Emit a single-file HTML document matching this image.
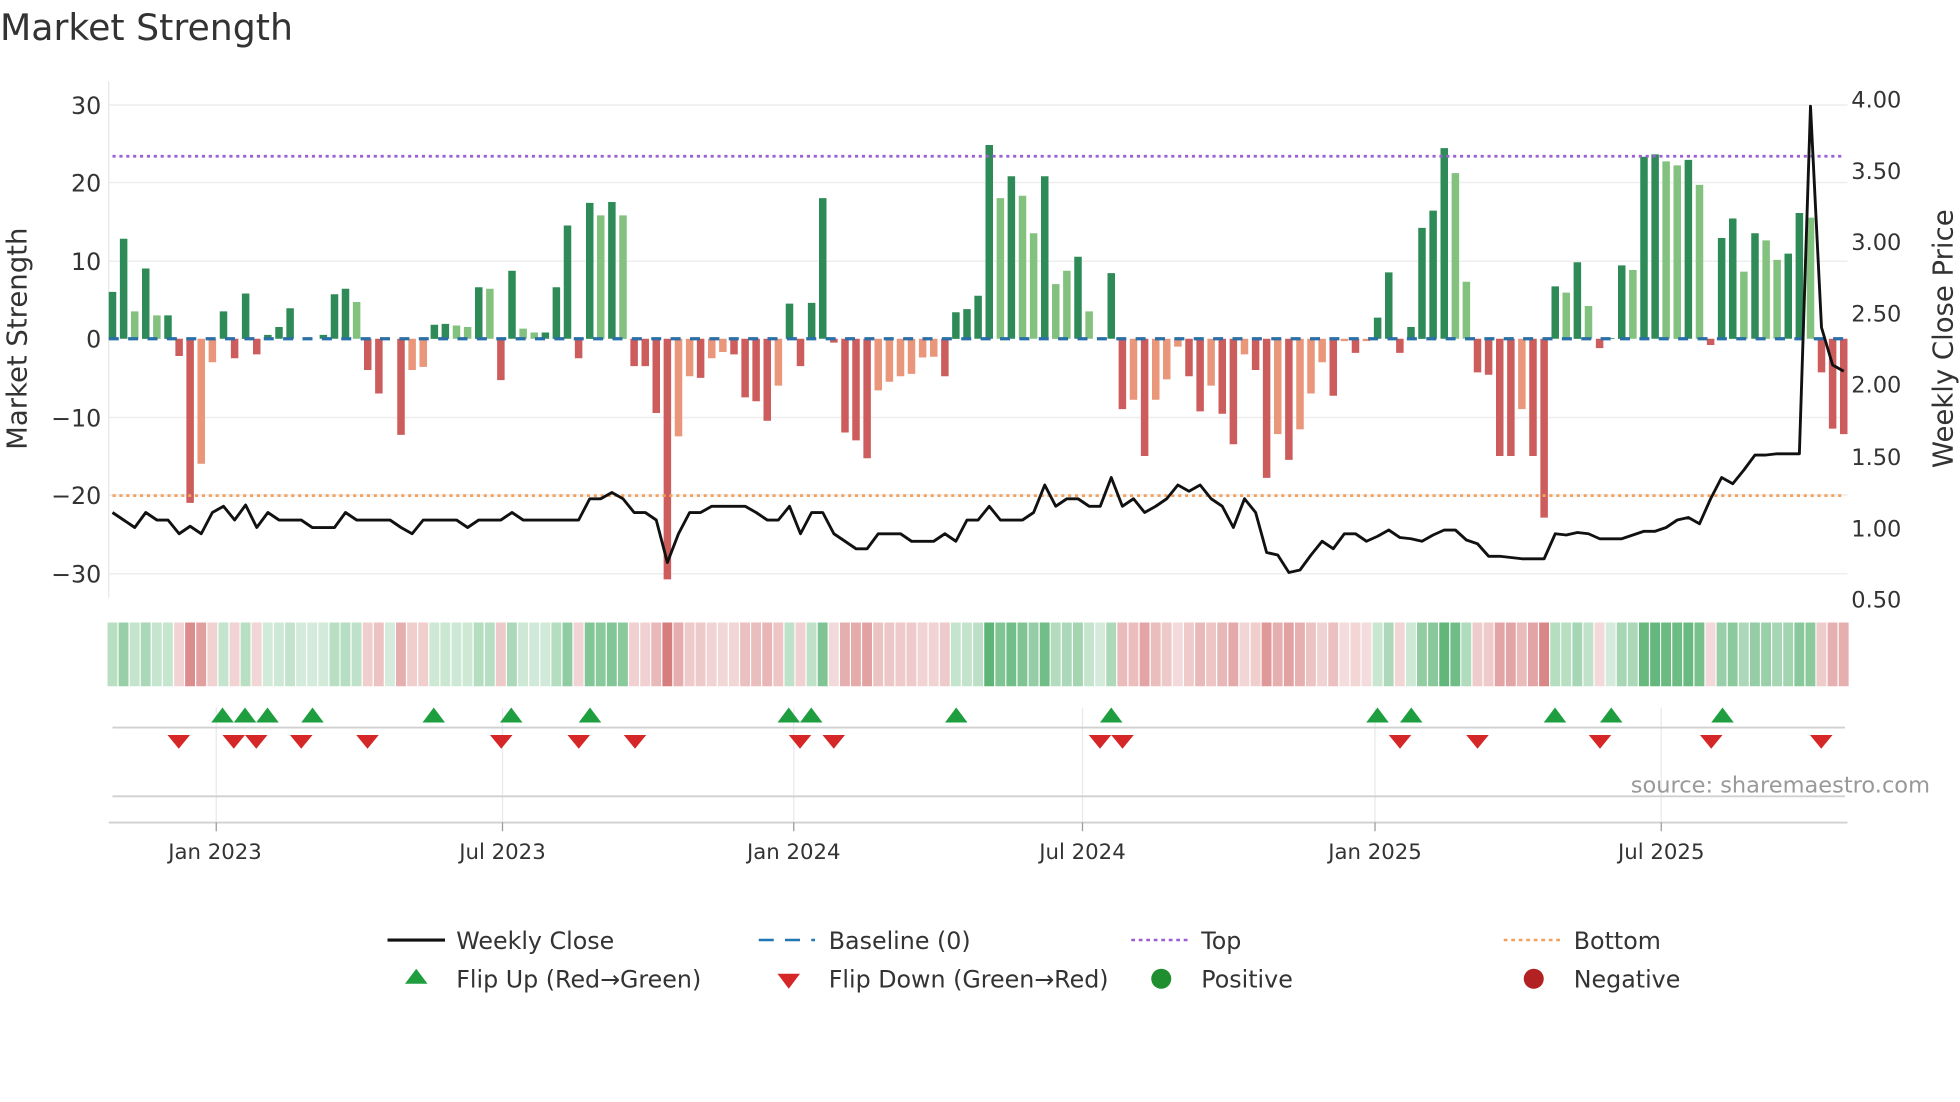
<!DOCTYPE html>
<html><head><meta charset="utf-8"><style>
html,body{margin:0;padding:0;background:#fff;width:1960px;height:1102px;overflow:hidden}
svg text{font-family:"DejaVu Sans","Liberation Sans",sans-serif;fill:#333}
</style></head><body>
<svg id="s" width="1960" height="1102" viewBox="0 0 1568 881.6" xmlns="http://www.w3.org/2000/svg">
<text x="0" y="32" font-size="29" fill="#333">Market Strength</text>
<g id="grid" stroke="#eeeeee" stroke-width="1.2">
<line x1="87" x2="1478" y1="84" y2="84"/><line x1="87" x2="1478" y1="146" y2="146"/><line x1="87" x2="1478" y1="209" y2="209"/><line x1="87" x2="1478" y1="334" y2="334"/><line x1="87" x2="1478" y1="396" y2="396"/><line x1="87" x2="1478" y1="459" y2="459"/>
</g>
<line x1="87" x2="87" y1="65" y2="478" stroke="#e6e6e6" stroke-width="1"/>
<g font-size="19" text-anchor="end">
<text x="81" y="91">30</text><text x="81" y="153">20</text><text x="81" y="216">10</text><text x="81" y="278">0</text><text x="81" y="341">−10</text><text x="81" y="403">−20</text><text x="81" y="466">−30</text>
</g>
<g font-size="18">
<text x="1481" y="86">4.00</text><text x="1481" y="143">3.50</text><text x="1481" y="200">3.00</text><text x="1481" y="257">2.50</text><text x="1481" y="314">2.00</text><text x="1481" y="372">1.50</text><text x="1481" y="429">1.00</text><text x="1481" y="486">0.50</text>
</g>
<text transform="translate(21,271) rotate(-90)" font-size="22" text-anchor="middle">Market Strength</text>
<text transform="translate(1562,271) rotate(-90)" font-size="22" text-anchor="middle">Weekly Close Price</text>
<g id="bars"></g>
<line x1="87" x2="1478" y1="271" y2="271" stroke="#2a6fa8" stroke-width="2.6" stroke-dasharray="8 7.5"/>
<line x1="90" x2="1476" y1="125" y2="125" stroke="#9a5fd6" stroke-width="2.2" stroke-dasharray="2.5 3"/>
<line x1="90" x2="1476" y1="396.5" y2="396.5" stroke="#f4a15d" stroke-width="2.2" stroke-dasharray="2.5 3"/>
<polyline id="price" fill="none" stroke="#111" stroke-width="2.3" stroke-linejoin="round"/>
<g id="heat"></g>
<g stroke="#e8e8ee" stroke-width="1">
<line x1="173" x2="173" y1="566" y2="658"/><line x1="402" x2="402" y1="566" y2="658"/><line x1="635" x2="635" y1="566" y2="658"/><line x1="866" x2="866" y1="566" y2="658"/><line x1="1100" x2="1100" y1="566" y2="658"/><line x1="1329" x2="1329" y1="566" y2="658"/>
</g>
<line x1="90" x2="1476" y1="582" y2="582" stroke="#d0d0d0" stroke-width="1.5"/>
<line x1="90" x2="1476" y1="637" y2="637" stroke="#d0d0d0" stroke-width="1.5"/>
<line x1="87" x2="1478" y1="658" y2="658" stroke="#d0d0d0" stroke-width="1.5"/>
<g stroke="#999" stroke-width="1"><line x1="173" x2="173" y1="658" y2="665"/><line x1="402" x2="402" y1="658" y2="665"/><line x1="635" x2="635" y1="658" y2="665"/><line x1="866" x2="866" y1="658" y2="665"/><line x1="1100" x2="1100" y1="658" y2="665"/><line x1="1329" x2="1329" y1="658" y2="665"/></g>
<g id="mk"></g>
<g font-size="17" text-anchor="middle">
<text x="172" y="687">Jan 2023</text><text x="402" y="687">Jul 2023</text><text x="635" y="687">Jan 2024</text><text x="866" y="687">Jul 2024</text><text x="1100" y="687">Jan 2025</text><text x="1329" y="687">Jul 2025</text>
</g>
<text x="1544" y="634" font-size="18" text-anchor="end" style="fill:#999">source: sharemaestro.com</text>
<g font-size="19">
<line x1="310" x2="356" y1="752" y2="752" stroke="#111" stroke-width="2.5"/><text x="365" y="759">Weekly Close</text>
<line x1="607" x2="652" y1="752" y2="752" stroke="#1f77b4" stroke-width="2" stroke-dasharray="12 9"/><text x="663" y="759">Baseline (0)</text>
<line x1="905" x2="950" y1="752" y2="752" stroke="#9a5fd6" stroke-width="2" stroke-dasharray="3 3"/><text x="961" y="759">Top</text>
<line x1="1203" x2="1248" y1="752" y2="752" stroke="#f4a15d" stroke-width="2" stroke-dasharray="3 3"/><text x="1259" y="759">Bottom</text>
<polygon points="324,787 342,787 333,775" fill="#1e9e3e"/><text x="365" y="790">Flip Up (Red→Green)</text>
<polygon points="622,779 640,779 631,791" fill="#d62728"/><text x="663" y="790">Flip Down (Green→Red)</text>
<circle cx="929" cy="783" r="8" fill="#1e8e2e"/><text x="961" y="790">Positive</text>
<circle cx="1227" cy="783" r="8" fill="#b22222"/><text x="1259" y="790">Negative</text>
</g>
</svg>
<script>
var D="6G 12.8G 3.5g 9G 3g 3G -2.2R -21R -16r -3r 3.5G -2.5R 5.8G -2R 0.5G 1.5G 3.9G 0R 0R 0.5G 5.7G 6.4G 4.7g -4R -7R 0R -12.3R -4r -3.6r 1.8G 1.9G 1.7g 1.5g 6.6G 6.4g -5.3R 8.7G 1.3g 0.8g 0.8G 6.6G 14.5G -2.5R 17.4G 15.8g 17.5G 15.8g -3.5R -3.5R -9.5R -30.8R -12.5r -4.8r -5R -2.5r -1.7r -2R -7.5R -8R -10.5R -6r 4.5G -3.5R 4.6G 18G -0.5R -12R -13R -15.3R -6.6r -5.5r -4.8r -4.5r -2.4r -2.3r -4.8R 3.4G 3.8G 5.5G 24.8G 18g 20.8G 18.3g 13.5g 20.8G 7g 8.7g 10.5G 3.5g 0R 8.4G -9R -7.8r -15R -7.8r -5.2r -1r -4.8R -9.3R -6r -9.6R -13.5R -2r -4R -17.8R -12.2r -15.5R -11.6r -7r -3r -7.3R -0.3r -1.8R -0.3r 2.7G 8.5G -1.8R 1.5G 14.2G 16.4G 24.4G 21.2g 7.3g -4.3R -4.6R -15R -15R -9r -15R -22.9R 6.7G 5.9g 9.8G 4.2g -1.2R 0.1G 9.4G 8.8g 23.3G 23.6G 22.7g 22.2g 22.9G 19.7g -0.8R 12.9G 15.4G 8.6g 13.5G 12.6g 10.1g 10.9G 16.1G 15.5g -4.3R -11.5R -12.2R".split(" ");
var P=[410,416,422,410,416,416,427,421,427,410,405,416,404,422,410,416,416,416,422,422,422,410,416,416,416,416,422,427,416,416,416,416,422,416,416,416,410,416,416,416,416,416,416,399,399,394,399,410,410,416,450,427,410,410,405,405,405,405,410,416,416,405,427,410,410,427,433,439,439,427,427,427,433,433,433,427,433,416,416,405,416,416,416,410,388,405,399,399,405,405,382,405,399,410,405,399,388,393,388,399,405,422,399,410,442,444,458,456,444,433,439,427,427,433,429,424,430,431,433,428,424,424,432,435,445,445,446,447,447,447,427,428,426,427,431,431,431,428,425,425,422,416,414,419,399,382,387,376,364,364,363,363,85,262,292,297];
var C={G:"#2e8b57",g:"#82c17e",R:"#cd5c5c",r:"#e9967a"};
var n=D.length,step=(1475-90)/(n-1),b="",h="",pts=[];
for(var i=0;i<n;i++){var v=parseFloat(D[i]),t=D[i].slice(-1),x=90+i*step;
 var y0=271,y1=271-v*6.25;if(Math.abs(v)>0.05)b+='<rect x="'+(x-3).toFixed(1)+'" y="'+Math.min(y0,y1).toFixed(1)+'" width="6" height="'+Math.abs(y1-y0).toFixed(1)+'" fill="'+C[t]+'"/>';
 var a=0.22+0.6*Math.min(Math.abs(v)/25,1);var col=v>=0?"rgba(60,165,90,"+a.toFixed(2)+")":"rgba(200,80,80,"+(a*0.9).toFixed(2)+")";
 h+='<rect x="'+(x-4).toFixed(1)+'" y="498" width="'+(step-1).toFixed(1)+'" height="51" fill="'+col+'"/>';
 pts.push(x.toFixed(1)+","+(P[Math.min(i,P.length-1)]));}
document.getElementById("bars").innerHTML=b;document.getElementById("heat").innerHTML=h;
pts[n-5]=(90+(n-5)*step).toFixed(1)+",363";pts[n-4]=(90+(n-4)*step).toFixed(1)+",85";pts[n-3]=(90+(n-3)*step).toFixed(1)+",262";pts[n-2]=(90+(n-2)*step).toFixed(1)+",292";pts[n-1]=(90+(n-1)*step).toFixed(1)+",297";
document.getElementById("price").setAttribute("points",pts.join(" "));
var U=[178,196,214,250,347,409,472,631,649,765,889,1102,1129,1244,1289,1378],W=[143,187,205,241,294,401,463,508,640,667,880,898,1120,1182,1280,1369,1457],m="";
U.forEach(function(x){m+='<polygon points="'+(x-9)+',578 '+(x+9)+',578 '+x+',566" fill="#1e9e3e"/>';});
W.forEach(function(x){m+='<polygon points="'+(x-9)+',588 '+(x+9)+',588 '+x+',599" fill="#d62728"/>';});
document.getElementById("mk").innerHTML=m;
</script>
</body></html>
